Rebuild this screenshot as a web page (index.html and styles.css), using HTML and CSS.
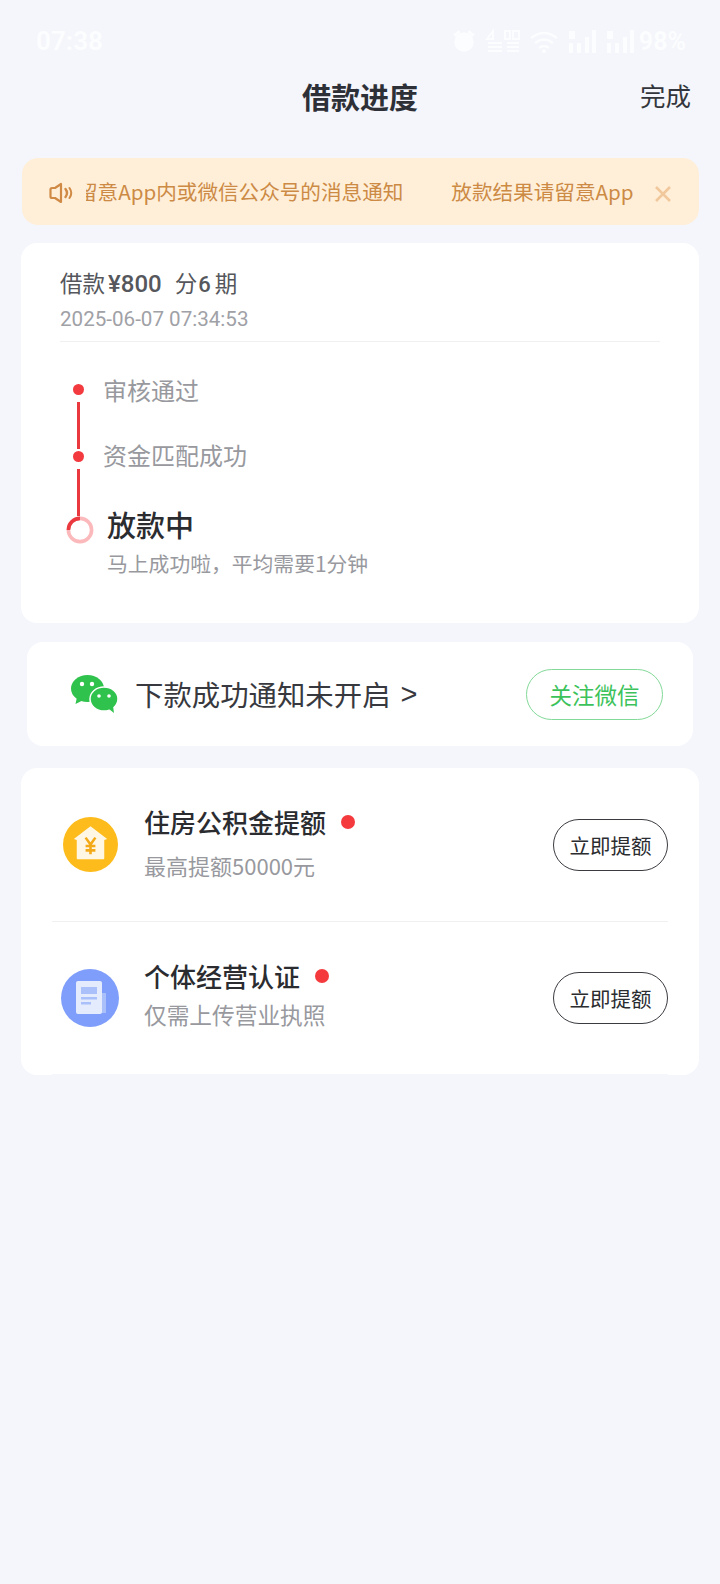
FILE: index.html
```html
<!DOCTYPE html>
<html lang="zh-CN">
<head>
<meta charset="utf-8">
<title>借款进度</title>
<link rel="stylesheet" href="styles.css">
</head>
<body>
<div class="status">
  <span class="time">07:38</span>
  <div class="status-right">
    <svg class="st-icon" width="26" height="26" viewBox="0 0 24 24"><circle cx="12" cy="13" r="9" fill="#fff"/><path d="M2 6l5-4 2 2-5 4zM22 6l-5-4-2 2 5 4z" fill="#fff"/></svg>
    <svg class="st-icon" width="36" height="24" viewBox="0 0 36 24"><path d="M2 10l6-8v8zM3 14h14M3 18h14M3 22h14M20 2h5v8h-5zM28 2h6v8h-6zM22 14h12M22 18h12M22 22h12" stroke="#fff" stroke-width="2" fill="none"/></svg>
    <svg class="st-icon" width="30" height="24" viewBox="0 0 30 24"><path d="M2 9q13-10 26 0M6 14q9-7 18 0M10 19q5-4 10 0" stroke="#fff" stroke-width="2.4" fill="none"/><circle cx="15" cy="22" r="2" fill="#fff"/></svg>
    <svg class="st-icon" width="30" height="24" viewBox="0 0 30 24"><path d="M2 14h4v10H2zM10 14h4v10h-4zM18 8h4v16h-4zM25 1h4v23h-4zM2 2h6v8H2z" fill="#fff"/></svg>
    <svg class="st-icon" width="30" height="24" viewBox="0 0 30 24"><path d="M2 14h4v10H2zM10 14h4v10h-4zM18 8h4v16h-4zM25 1h4v23h-4zM2 2h6v8H2z" fill="#fff"/></svg>
    <span class="batt">98%</span>
  </div>
</div>

<header class="nav">
  <h1 class="nav-title">借款进度</h1>
  <span class="nav-done">完成</span>
</header>

<div class="notice">
  <svg class="notice-icon" width="26" height="22" viewBox="0 0 26 22"><path d="M2.500 7.500a1.500 1.500 0 0 1 1.500-1.500h3l6-4v18l-6-4H4a1.500 1.500 0 0 1-1.500-1.500z" fill="none" stroke="#d08a45" stroke-width="2.200" stroke-linejoin="round"/><path d="M17.500 7q3 4 0 8" fill="none" stroke="#d08a45" stroke-width="2.400" stroke-linecap="round"/><path d="M21.500 6q3.500 5 0 10" fill="none" stroke="#d08a45" stroke-width="2" stroke-linecap="round"/></svg>
  <div class="marquee">
    <div class="marquee-track">
      <span>放款结果请留意App内或微信公众号的消息通知</span>
      <span>放款结果请留意App内或微信公众号的消息通知</span>
    </div>
  </div>
  <svg class="notice-close" width="18" height="18" viewBox="0 0 18 18"><path d="M2 2l14 14M16 2L2 16" stroke="#f1c79c" stroke-width="2.600"/></svg>
</div>

<section class="card progress">
  <div class="loan">
    <div class="loan-line">借款<b class="num">¥800</b><span class="gap"></span>分<b class="num six">6</b>期</div>
    <div class="loan-date">2025-06-07 07:34:53</div>
  </div>
  <div class="steps">
    <div class="step">
      <div class="rail"><i class="dot"></i><i class="bar"></i></div>
      <div class="step-text">审核通过</div>
    </div>
    <div class="step">
      <div class="rail"><i class="dot"></i><i class="bar"></i></div>
      <div class="step-text lifted">资金匹配成功</div>
    </div>
    <div class="step current">
      <div class="rail">
        <svg width="28" height="28" viewBox="0 0 28 28"><circle cx="14" cy="14" r="11.600" fill="none" stroke="#fcb9bc" stroke-width="3.600"/><path d="M2.400 14A11.600 11.600 0 0 1 14 2.400" fill="none" stroke="#ea3a3f" stroke-width="3.600"/></svg>
      </div>
      <div class="current-text">
        <div class="current-title">放款中</div>
        <div class="current-sub">马上成功啦，平均需要1分钟</div>
      </div>
    </div>
  </div>
</section>

<section class="card wechat">
  <svg class="wechat-icon" width="47" height="38" viewBox="0 0 47 38"><ellipse cx="16.500" cy="13.500" rx="16.500" ry="13.500" fill="#2fc24c"/><path d="M6 22l-1.500 7 8-4z" fill="#2fc24c"/><ellipse cx="33" cy="24" rx="14" ry="12" fill="#2fc24c" stroke="#fff" stroke-width="1.500"/><path d="M38 34l5 4-1-7z" fill="#2fc24c"/><circle cx="11" cy="9" r="2.200" fill="#fff"/><circle cx="21" cy="9" r="2.200" fill="#fff"/><circle cx="28" cy="21" r="1.800" fill="#fff"/><circle cx="38" cy="21" r="1.800" fill="#fff"/></svg>
  <div class="wechat-text">下款成功通知未开启<span class="wechat-arrow">&gt;</span></div>
  <button class="wechat-btn">关注微信</button>
</section>

<section class="card offers">
  <div class="offer first">
    <svg class="offer-icon" width="55" height="55" viewBox="0 0 56 56"><circle cx="28" cy="28" r="28" fill="#fdbc1c"/><path d="M28 9.500L11 22.500l3 1V42a1 1 0 0 0 1 1h26a1 1 0 0 0 1-1V23.500l3-1z" fill="#fff7e3"/><path d="M23 21l5 7 5-7M28 28v10M23 29.500h10M23 34h10" fill="none" stroke="#f4a916" stroke-width="2.600"/></svg>
    <div class="offer-body">
      <div class="offer-title">住房公积金提额<i class="reddot"></i></div>
      <div class="offer-sub">最高提额50000元</div>
    </div>
    <button class="offer-btn">立即提额</button>
  </div>
  <div class="offer second">
    <svg class="offer-icon big" width="58" height="58" viewBox="0 0 58 58"><circle cx="29" cy="29" r="29" fill="#7f9efc"/><rect x="39" y="24" width="6" height="20" fill="#a9c0fb"/><rect x="15" y="12" width="26" height="33" rx="2" fill="#e3ebfd"/><rect x="20" y="18" width="16" height="7" fill="#a9c0fb"/><rect x="20" y="28" width="16" height="2.500" fill="#a9c0fb"/><rect x="20" y="33" width="10" height="2.500" fill="#a9c0fb"/></svg>
    <div class="offer-body">
      <div class="offer-title">个体经营认证<i class="reddot"></i></div>
      <div class="offer-sub">仅需上传营业执照</div>
    </div>
    <button class="offer-btn">立即提额</button>
  </div>
</section>
</body>
</html>
```

FILE: styles.css
```css
* { box-sizing: border-box; }
html, body { margin: 0; padding: 0; }
body {
  width: 720px;
  min-height: 1584px;
  background: #f4f6fb;
  font-family: "Noto Sans CJK SC", "Noto Sans", sans-serif;
  color: #333;
}

.status {
  height: 64px;
  padding: 18px 34px 0 36px;
  display: flex;
  align-items: center;
  justify-content: space-between;
  color: #fff;
  opacity: .8;
}
.time { font: 700 26px "Roboto", sans-serif; }
.status-right { display: flex; align-items: center; gap: 8px; }
.st-icon { display: block; }
.batt { font: 700 25px "Roboto", sans-serif; margin-left: -4px; }

.nav {
  height: 66px;
  position: relative;
  display: flex;
  align-items: center;
  justify-content: center;
}
.nav-title { margin: -2px 0 0; font-size: 29px; font-weight: 700; color: #2e3038; line-height: 40px; }
.nav-done { position: absolute; right: 29px; top: 13px; font-size: 25.500px; line-height: 36px; color: #33353c; }

.notice {
  margin: 28px 21px 0 22px;
  height: 67px;
  background: #ffefd9;
  border-radius: 16px;
  display: flex;
  align-items: center;
  padding: 0 27px 0 26px;
}
.notice-icon { flex: none; margin-top: 2px; }
.marquee {
  flex: none;
  width: 548px;
  margin-left: 12px;
  overflow: hidden;
}
.marquee-track {
  display: flex;
  gap: 48px;
  margin-left: -112px;
  white-space: nowrap;
  font-size: 20.600px;
  line-height: 30px;
  margin-top: -1px;
  color: #cc8a45;
}
.notice-close { flex: none; margin: 4px 0 0 20px; }

.card { background: #fff; border-radius: 16px; }

.progress {
  margin: 18px 21px 0;
  height: 380px;
  padding: 22px 39px 0;
}
.loan { border-bottom: 1px solid #f0f0f2; height: 77px; }
.loan-line {
  display: flex;
  align-items: baseline;
  font-size: 22.500px;
  line-height: 34px;
  color: #55575c;
}
.num { font-family: "Roboto", sans-serif; font-weight: 500; font-size: 24px; margin-left: 3px; }
.six { margin: 0 4px 0 1px; font-size: 22px; }
.gap { width: 13px; }
.loan-date {
  font: 400 20.600px/30px "Roboto", sans-serif;
  color: #a0a1a6;
  margin-top: 2px;
}

.steps { padding-top: 30px; }
.step { display: flex; height: 67px; }
.rail {
  width: 40px;
  margin-left: 2px;
  flex: none;
  display: flex;
  flex-direction: column;
  padding-left: 11px;
}
.dot { width: 11px; height: 11px; border-radius: 50%; background: #f23a3f; margin-top: 12px; flex: none; }
.bar { width: 3px; height: 47px; background: #e9393e; margin: 7px 0 0 4px; flex: none; }
.step-text { font-size: 24px; line-height: 36px; color: #98999e; margin-left: 1px; }
.lifted { margin-top: -2px; }
.current { height: auto; }
.current .rail { padding-left: 5px; padding-top: 10px; width: 46px; margin-left: 1px; }
.current-text { margin-top: -3px; }
.current-title { font-size: 29px; line-height: 42px; font-weight: 500; color: #2b2c30; }
.current-sub { font-size: 20.800px; line-height: 30px; color: #98999e; margin-top: 3px; }

.wechat {
  margin: 19px 27px 0;
  height: 104px;
  display: flex;
  align-items: center;
  padding: 0 30px 0 44px;
}
.wechat-icon { flex: none; }
.wechat-text { font-size: 28.400px; color: #38393e; line-height: 40px; margin-left: 17px; white-space: nowrap; display: flex; align-items: center; }
.wechat-arrow { font-family: "Liberation Sans", sans-serif; font-size: 29px; margin-left: 10px; }
.wechat-btn {
  margin-left: auto;
  width: 137px;
  height: 51px;
  border: 1px solid #83d998;
  border-radius: 26px;
  background: #fff;
  color: #3cc25a;
  font: 400 22.500px "Noto Sans CJK SC", sans-serif;
  padding: 0;
}

.offers {
  margin: 22px 21px 0;
  height: 307px;
  position: relative;
  overflow: hidden;
}
.offers::after {
  content: "";
  position: absolute;
  left: 31px;
  right: 31px;
  bottom: 0;
  border-bottom: 1px solid #f4f6fb;
}
.offer { display: flex; align-items: center; position: relative; }
.first { height: 154px; margin: 0 31px; border-bottom: 1px solid #f0f0f2; }
.second { height: 151px; margin: 0 31px; }
.offer-icon { flex: none; margin-left: 11px; }
.offer-icon.big { margin-left: 9px; }
.offer-body { margin-left: 26px; flex: 1; }
.big + .offer-body { margin-left: 25px; }
.first .offer-body { margin-top: -5px; }
.second .offer-body { margin-top: -6px; }
.offer-title {
  display: flex;
  align-items: center;
  font-size: 26px;
  line-height: 36px;
  font-weight: 500;
  color: #2b2c30;
}
.reddot { width: 14px; height: 14px; border-radius: 50%; background: #f53a3e; margin-left: 15px; }
.offer-sub { font-size: 22px; line-height: 32px; color: #98999e; margin-top: 9px; }
.second .offer-sub { margin-top: 5px; font-size: 22.700px; }
.offer-btn {
  flex: none;
  width: 115px;
  height: 52px;
  border: 1px solid #3a3b40;
  border-radius: 26px;
  background: #fff;
  color: #2b2c30;
  font: 400 20.500px "Noto Sans CJK SC", sans-serif;
  padding: 0;
}
```
